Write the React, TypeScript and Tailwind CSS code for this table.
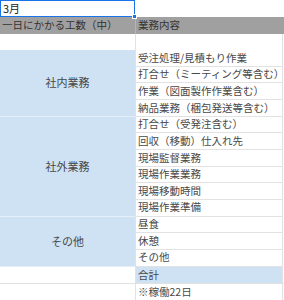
const font = { fontFamily: '"Noto Sans CJK JP", "Noto Sans", sans-serif' };

type Group = { label: string; items: string[] };

const groups: Group[] = [
  {
    label: "社内業務",
    items: ["受注処理/見積もり作業", "打合せ（ミーティング等含む）", "作業（図面製作作業含む）", "納品業務（梱包発送等含む）"],
  },
  {
    label: "社外業務",
    items: ["打合せ（受発注含む）", "回収（移動）仕入れ先", "現場監督業務", "現場作業業務", "現場移動時間", "現場作業準備"],
  },
  {
    label: "その他",
    items: ["昼食", "休憩", "その他"],
  },
];

function Cell({ text }: { text?: string }) {
  return (
    <div className="flex h-[16.67px] items-center border-b border-[#e2e2e2] bg-white pl-[2px] text-[10.5px] leading-none whitespace-nowrap text-[#484848]">
      {text}
    </div>
  );
}

export default function App() {
  return (
    <div className="h-[300px] w-[284px] overflow-hidden bg-white" style={font}>
      {/* selected cell */}
      <div className="flex h-[16.67px]">
        <div className="relative flex w-[135px] items-center border border-[#1a73e8] pl-[2px] text-[11px] leading-none text-[#222]">
          3月
          <span className="absolute right-[-3px] bottom-[-3px] h-[5px] w-[5px] border border-white bg-[#1a73e8]" />
        </div>
      </div>

      {/* header */}
      <div className="flex h-[17.33px] bg-[#a0a0a0] text-[10.5px] leading-none text-[#333]">
        <div className="flex w-[135px] items-center pl-[2px]">一日にかかる工数（中）</div>
        <div className="flex w-[149px] items-center border-l border-[#b5b5b5] pl-[2px]">業務内容</div>
      </div>

      {/* empty row */}
      <div className="flex h-[16px]">
        <div className="w-[135px]" />
        <div className="w-[148px] border-r border-l border-[#e2e2e2]" />
      </div>

      {groups.map((g) => (
        <div key={g.label} className="flex">
          <div className="flex w-[135px] items-center justify-center border-b border-[#e6eef7] bg-[#cfe2f3] text-[11px] leading-none text-[#484848]">
            {g.label}
          </div>
          <div className="flex w-[148px] flex-col border-r border-l border-[#e2e2e2]">
            {g.items.map((it) => (
              <Cell key={it} text={it} />
            ))}
          </div>
        </div>
      ))}

      <div className="flex border-b border-[#e2e2e2]">
        <div className="w-[135px]" />
        <div className="w-[148px] border-r border-l border-[#e2e2e2]">
          <div className="flex h-[16.67px] items-center bg-[#cfe2f3] pl-[2px] text-[10.5px] leading-none text-[#484848]">合計</div>
        </div>
      </div>

      <div className="flex">
        <div className="w-[135px]" />
        <div className="w-[148px] border-r border-l border-[#e2e2e2]">
          <Cell text="※稼働22日" />
        </div>
      </div>
    </div>
  );
}
